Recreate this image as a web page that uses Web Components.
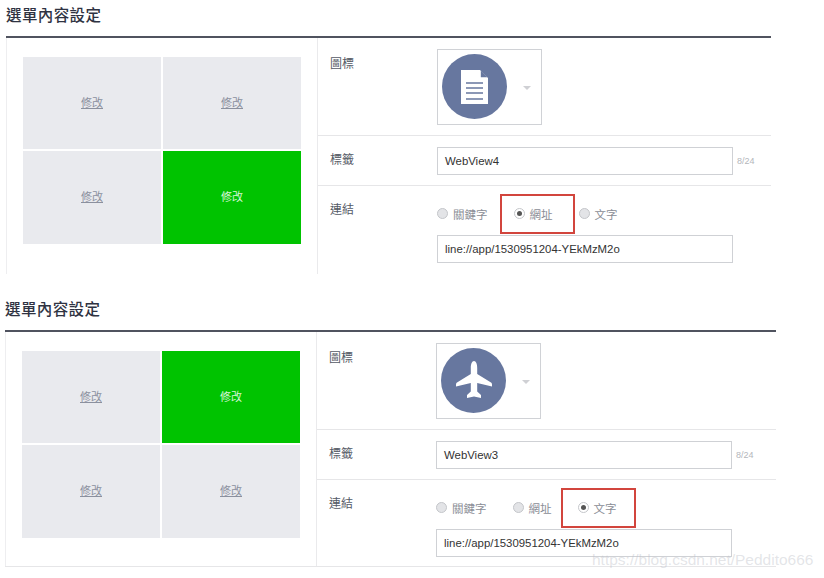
<!DOCTYPE html>
<html>
<head>
<meta charset="utf-8">
<style>
  html,body{margin:0;padding:0;background:#fff;overflow:hidden;height:578px}
  body{font-family:"Liberation Sans","Noto Sans CJK TC",sans-serif;position:relative}
  .first{margin-left:6px;width:765px}
  .second{margin-left:5px;width:771px;margin-top:20px}
  .mark{position:absolute;left:592px;top:551px;font-size:15.5px;color:rgba(190,192,200,.42);white-space:nowrap}
</style>
</head>
<body>
<menu-section class="first" panel="236">
  <cell-grid active="4" slot="left"></cell-grid>
  <form-row h="98" label="圖標"><icon-picker icon="doc"></icon-picker></form-row>
  <form-row h="50" label="標籤" center><text-field count="8/24">WebView4</text-field></form-row>
  <form-row label="連結" grow>
    <link-choice marked="1"></link-choice>
  </form-row>
</menu-section>
<menu-section class="second" panel="234" closed>
  <cell-grid active="2" slot="left"></cell-grid>
  <form-row h="98" label="圖標"><icon-picker icon="plane"></icon-picker></form-row>
  <form-row h="50" label="標籤" center><text-field count="8/24">WebView3</text-field></form-row>
  <form-row label="連結" grow>
    <link-choice marked="2"></link-choice>
  </form-row>
</menu-section>
<div class="mark">https://blog.csdn.net/Peddito666</div>

<script>
const CJK='"Noto Sans CJK TC","Liberation Sans",sans-serif';

class MenuSection extends HTMLElement{
  constructor(){
    super();
    const panel=this.getAttribute("panel");
    this.attachShadow({mode:'open'}).innerHTML=`
<style>
  :host{display:block}
  h2{margin:0;height:36px;font:500 15.5px/28px ${CJK};color:#2f3342;letter-spacing:.4px}
  .panel{display:flex;height:${panel}px;border-top:2px solid #50535f}
  :host([closed]) .panel{border-bottom:1px solid #e6e6e8}
  .left{flex:none;width:294px;padding:19px 0 0 16px;border-left:1px solid #eeeef0;border-right:1px solid #eaeaec}
  .right{flex:1;display:flex;flex-direction:column;min-width:0}
</style>
<h2>選單內容設定</h2>
<div class="panel">
  <div class="left"><slot name="left"></slot></div>
  <div class="right"><slot></slot></div>
</div>`;
  }
}

class CellGrid extends HTMLElement{
  constructor(){
    super();
    const active=+this.getAttribute("active");
    this.attachShadow({mode:'open'}).innerHTML=`
<style>
  :host{display:grid;grid-template-columns:138px 138px;grid-template-rows:92px 93px;gap:2px;width:278px}
  a{display:flex;align-items:center;justify-content:center;padding-bottom:3px;box-sizing:border-box;background:#e9eaee;color:#8b909e;font:11px ${CJK};text-decoration:underline}
  a.on{background:#00c300;color:#d8f5d8;text-decoration:none}
</style>
${[1,2,3,4].map(i=>`<a class="${i==active?"on":""}">修改</a>`).join("")}`;
  }
}

class FormRow extends HTMLElement{
  constructor(){
    super();
    const h=this.getAttribute("h");
    this.attachShadow({mode:'open'}).innerHTML=`
<style>
  :host{display:flex;box-sizing:border-box;padding-left:12px;border-bottom:1px solid #e6e6e8;${h?`height:${h}px;`:""}}
  :host([grow]){flex:1;border-bottom:0}
  :host([center]){align-items:center}
  label{width:107px;flex:none;font:12px ${CJK};color:#555a66;padding-top:16px}
  :host([center]) label{padding:0 0 4px}
  :host([grow]) label{padding-top:14px}
  .val{flex:1;min-width:0}
</style>
<label>${this.getAttribute("label")}</label>
<div class="val"><slot></slot></div>`;
  }
}

class IconPicker extends HTMLElement{
  constructor(){
    super();
    const doc=`<path d="M19 16H38L46 24V50H19Z" fill="#fff"/><path d="M38.8 16.5L45.5 23.2H38.8Z" fill="#67779f"/>
      <path d="M24 29H41M24 34H41M24 39H41M24 45H41" stroke="#67779f" stroke-width="1.4"/>`;
    const plane=`<path fill="#fff" d="M33 13C35 13 36.2 16 36.2 20V26L50 34.5C51 35 51 36 51 37.5V38.5L36.2 35V43.5L40 47V50L33 48.5L26 50V47L29.8 43.5V35L15 38.5V37.5C15 36 15 35 16 34.5L29.8 26V20C29.8 16 31 13 33 13Z"/>`;
    this.attachShadow({mode:'open'}).innerHTML=`
<style>
  :host{display:flex;align-items:center;box-sizing:border-box;width:105px;height:76px;margin-top:11px;border:1px solid #d0d2d6;padding-left:4px}
  svg{display:block;flex:none;margin-bottom:2px}
  i{width:0;height:0;margin-left:16px;margin-top:2px;border:4px solid transparent;border-top:4px solid #cfd0d4;border-bottom:0}
</style>
<svg width="65" height="65" viewBox="0 0 65 65"><circle cx="32.5" cy="32.5" r="32.5" fill="#67779f"/>${this.getAttribute("icon")=="doc"?doc:plane}</svg>
<i></i>`;
  }
}

class TextField extends HTMLElement{
  constructor(){
    super();
    const count=this.getAttribute("count");
    this.attachShadow({mode:'open'}).innerHTML=`
<style>
  :host{display:flex;align-items:flex-end}
  .box{box-sizing:border-box;width:296px;height:28px;border:1px solid #cfd1d5;padding:0 7px;font:11.4px/26px "Liberation Sans",sans-serif;color:#333}
  span{margin-left:4px;font:9px/14px "Liberation Sans",sans-serif;color:#b4b6bb;padding-bottom:7px}
</style>
<div class="box"><slot></slot></div>
${count?`<span>${count}</span>`:""}`;
  }
}

class RadioOption extends HTMLElement{
  constructor(){
    super();
    this.attachShadow({mode:'open'}).innerHTML=`
<style>
  :host{display:inline-flex;align-items:center;position:relative;font:11.5px/16px ${CJK};color:#8a8d96}
  i{box-sizing:border-box;width:11px;height:11px;top:-1px;border-radius:50%;border:1px solid #c4c6ca;background:#e3e4e7;margin-right:5px;position:relative}
  :host([checked]) i{background:#fff}
  :host([checked]) i::after{content:"";position:absolute;left:2px;top:2px;width:5px;height:5px;border-radius:50%;background:#555}
  :host([marked])::after{content:"";position:absolute;box-sizing:border-box;left:-14px;top:-12px;width:75px;height:40px;border:2px solid #d2453d}
  :host([marked="far"])::after{left:-17px}
</style>
<i></i><slot></slot>`;
  }
}

class LinkChoice extends HTMLElement{
  constructor(){
    super();
    const m=+this.getAttribute("marked");
    const opts=["關鍵字","網址","文字"].map((t,i)=>
      `<radio-option ${i==m?`checked marked="${i==2?"far":"near"}"`:""}>${t}</radio-option>`).join("");
    this.attachShadow({mode:'open'}).innerHTML=`
<style>
  :host{display:block;padding-top:20px}
  .opts{display:flex;gap:26px;height:16px;margin-bottom:13px}
</style>
<div class="opts">${opts}</div>
<text-field>line://app/1530951204-YEkMzM2o</text-field>`;
  }
}

customElements.define('menu-section',MenuSection);
customElements.define('cell-grid',CellGrid);
customElements.define('form-row',FormRow);
customElements.define('icon-picker',IconPicker);
customElements.define('text-field',TextField);
customElements.define('radio-option',RadioOption);
customElements.define('link-choice',LinkChoice);
</script>
</body>
</html>
